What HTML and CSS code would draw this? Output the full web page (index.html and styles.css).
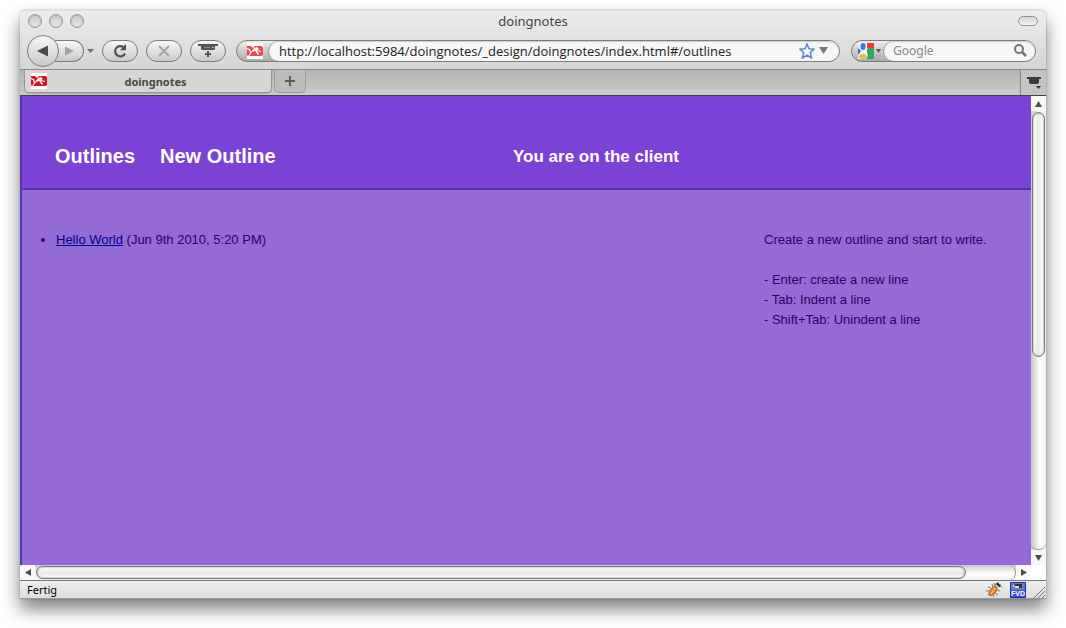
FILE: index.html
```
<!DOCTYPE html>
<html lang="en">
<head>
<meta charset="utf-8">
<title>doingnotes</title>
<link rel="stylesheet" href="styles.css">
</head>
<body>
<div class="window">
  <div class="chrome">
    <div class="titlebar">
      <div class="lights">
        <button class="light" aria-label="Close window"></button>
        <button class="light" aria-label="Minimize window"></button>
        <button class="light" aria-label="Zoom window"></button>
      </div>
      <span class="window-title">doingnotes</span>
      <button class="toolbar-toggle" aria-label="Toggle toolbar"></button>
    </div>
    <div class="toolbar">
      <div class="history">
        <button class="back" aria-label="Back"><svg width="12" height="12" viewBox="0 0 12 12"><path d="M0 6 11 0.500v11z" fill="#4b4b4b"/></svg></button>
        <button class="forward" aria-label="Forward"><svg width="10" height="10" viewBox="0 0 10 10"><path d="M10 5 1 0.500v9z" fill="#a2a2a2"/></svg></button>
        <button class="plain history-menu" aria-label="History"><svg width="7" height="4" viewBox="0 0 7 4"><path d="M0 0h7L3.500 4z" fill="#6d6d6d"/></svg></button>
      </div>
      <button class="pill" aria-label="Reload"><svg width="16" height="16" viewBox="0 0 16 16"><path d="M13 10.500A5.200 5.200 0 1 1 11.300 4" fill="none" stroke="#505050" stroke-width="2.200"/><path d="M14 1v6.200H8z" fill="#505050"/></svg></button>
      <button class="pill" aria-label="Stop"><svg width="12" height="12" viewBox="0 0 12 12"><path d="M1 1l10 10M11 1 1 11" stroke="#a5a5a5" stroke-width="2"/></svg></button>
      <button class="pill" aria-label="Add video"><svg width="20" height="14" viewBox="0 0 20 14"><path d="M0 0h20v2h-3v3q0 1-1 1H4q-1 0-1-1V2H0z" fill="#555"/><path d="M6 3.500h6" stroke="#888"/><path d="M14 3.500h2" stroke="#bbb"/><path d="M10 7v6M7 10h6" stroke="#555" stroke-width="2"/></svg></button>
      <div class="field address">
        <span class="identity"><svg width="16" height="16" viewBox="0 0 16 16"><path d="M0 0h16v16H0z" fill="#fff"/><path d="M0 3h4l2 2 2-2h7l1 2v7q-1 1-2 1H2q-2 0-2-1z" fill="#e84a4e"/><path d="M0 5l3 1 1 3 3-4 3-1 2 2-2 1 4 1v1l-4-1 2 3-1 1-3-4-3 1-3 4H1l2-3-1-3-2-1z" fill="#fff"/></svg></span>
        <div class="field-body">
          <input class="input url" type="text" aria-label="Address" value="http://localhost:5984/doingnotes/_design/doingnotes/index.html#/outlines">
          <button class="plain" aria-label="Bookmark this page"><svg width="16" height="16" viewBox="0 0 16 16"><path d="M8 1l2 4.700 5 .4-3.700 3.500 1.200 5.400L8 12.200 3.500 15l1.200-5.400L1 6.100l5-.4z" fill="#f4f8ff" stroke="#5d86d2" stroke-width="1.500"/></svg></button>
          <button class="plain" aria-label="Show history"><svg width="9" height="7" viewBox="0 0 9 7"><path d="M0 0h9L4.500 7z" fill="#777"/></svg></button>
        </div>
      </div>
      <div class="field search">
        <button class="plain identity engine" aria-label="Search engine"><svg width="16" height="16" viewBox="0 0 16 16"><path d="M0 0h16v16H0z" fill="#e9eef5"/><path d="M9 0h7v5h-7z" fill="#ee3b33"/><path d="M9 6q0-1 2-1h5v11H8q3-3 1-6z" fill="#35a660"/><path d="M0 5l3 3-3 4z" fill="#3b65b5"/><ellipse cx="5" cy="3.500" rx="2.500" ry="3.500" fill="#3a7bd0"/><path d="M4 8q5-1 5 3z" fill="#fff"/><ellipse cx="5" cy="13.500" rx="4" ry="2.500" fill="#efb93e"/></svg><svg width="5" height="4" viewBox="0 0 5 4"><path d="M0 0h5L2.500 4z" fill="#555"/></svg></button>
        <div class="field-body">
          <input class="input" type="text" aria-label="Search" placeholder="Google">
          <button class="plain" aria-label="Search"><svg width="13" height="13" viewBox="0 0 13 13"><circle cx="5" cy="5" r="4" fill="none" stroke="#777" stroke-width="2"/><path d="M8 8l4 4" stroke="#777" stroke-width="2.500"/></svg></button>
        </div>
      </div>
    </div>
  </div>
  <div class="tabs">
    <button class="tab"><svg width="16" height="16" viewBox="0 0 16 16"><path d="M0 0h16v16H0z" fill="#fff"/><path d="M0 3h4l2 2 2-2h7l1 2v7q-1 1-2 1H2q-2 0-2-1z" fill="#df1018"/><path d="M0 5l3 1 1 3 3-4 3-1 2 2-2 1 4 1v1l-4-1 2 3-1 1-3-4-3 1-3 4H1l2-3-1-3-2-1z" fill="#fff"/></svg><span class="tab-label">doingnotes</span></button>
    <button class="new-tab" aria-label="New tab"><svg width="10" height="10" viewBox="0 0 10 10"><path d="M5 0v10M0 5h10" stroke="#5c5c5c" stroke-width="2"/></svg></button>
    <button class="tab-menu" aria-label="List tabs"><svg width="14" height="12" viewBox="0 0 14 12"><path d="M0 0h14v2h-2v3q0 2-2 2H4Q2 7 2 5V2H0z" fill="#3b3b3b"/><path d="M9 9h5l-2.500 3z" fill="#333"/></svg></button>
  </div>
  <div class="viewport">
    <div class="page">
      <header class="banner">
        <nav class="nav"><a href="#/outlines">Outlines</a><a href="#/new">New Outline</a></nav>
        <p class="location">You are on the client</p>
      </header>
      <main class="content">
        <ul class="outlines">
          <li><a href="#/outlines/hello-world">Hello World</a> (Jun 9th 2010, 5:20 PM)</li>
        </ul>
        <aside class="help">
          <p>Create a new outline and start to write.</p>
          <p>- Enter: create a new line<br>- Tab: Indent a line<br>- Shift+Tab: Unindent a line</p>
        </aside>
      </main>
    </div>
    <div class="scroll scroll-y">
      <button class="plain arrow" aria-label="Scroll up"><svg width="7" height="6" viewBox="0 0 7 6"><path d="M3.500 0 7 6H0z" fill="#4c4c4c"/></svg></button>
      <div class="track"><div class="thumb"></div></div>
      <button class="plain arrow" aria-label="Scroll down"><svg width="7" height="6" viewBox="0 0 7 6"><path d="M3.500 6 7 0H0z" fill="#4c4c4c"/></svg></button>
    </div>
    <div class="scroll scroll-x">
      <button class="plain arrow" aria-label="Scroll left"><svg width="6" height="7" viewBox="0 0 6 7"><path d="M0 3.500 6 0v7z" fill="#4c4c4c"/></svg></button>
      <div class="track"><div class="thumb"></div></div>
      <button class="plain arrow" aria-label="Scroll right"><svg width="6" height="7" viewBox="0 0 6 7"><path d="M6 3.500 0 0v7z" fill="#4c4c4c"/></svg></button>
    </div>
  </div>
  <footer class="status">
    <span class="status-text">Fertig</span>
    <button class="plain" aria-label="Firebug"><svg width="16" height="16" viewBox="0 0 16 16"><path d="M5 6 2 5M4 9H0M4 11l-2 2M7 13l1 2M9 11l3 2M11 8l3 1M7 5 6 2M9 4 8 1M14 4l2 1" stroke="#a3714c"/><ellipse cx="7" cy="9" rx="2.500" ry="5.500" transform="rotate(40 7 9)" fill="#e58a35" stroke="#b9652a"/><path d="M9 6 5 12" stroke="#ffd09a"/><circle cx="12" cy="3" r="2.500" fill="#2c2f2b"/><path d="M10 3l3 3M13 1l1 1" stroke="#dfe8dc" stroke-width="1.500"/></svg></button>
    <button class="plain" aria-label="FVD"><svg width="16" height="16" viewBox="0 0 16 16"><path d="M.500.500h15v15H.500z" fill="#3d55cc" stroke="#0a2fc4"/><path d="M1 1h14v7H1z" fill="#6e79c4"/><path d="M5 2h7v4H5z" fill="#333"/><path d="M5 4h4v2H5zM3 3h1v2H3z" fill="#ddd"/><text x="8" y="14" class="fvd">FVD</text></svg></button>
    <svg class="grip" width="11" height="11" viewBox="0 0 11 11"><path d="M0 11 11 0M4 11l7-7M8 11l3-3" stroke="#777"/></svg>
  </footer>
</div>
</body>
</html>
```
FILE: styles.css
```
* { box-sizing: border-box; }

body {
  margin: 0;
  padding: 10px 20px 29px;
  min-height: 100vh;
  display: flex;
  background: #fff;
  font-family: "Noto Sans", "Open Sans", sans-serif;
}

button {
  display: flex;
  align-items: center;
  justify-content: center;
  margin: 0;
  padding: 0;
  font: inherit;
}

svg { display: block; flex: none; }

.plain { border: 0; background: none; }

.window {
  flex: 1;
  min-width: 0;
  display: flex;
  flex-direction: column;
  border-radius: 5px 5px 0 0;
  box-shadow: 0 10px 18px rgba(0, 0, 0, .5), 0 0 2px rgba(0, 0, 0, .25);
}

.chrome {
  height: 60px;
  border-radius: 5px 5px 0 0;
  border-top: 1px solid #ddd;
  border-bottom: 1px solid #8b8b8b;
  background: linear-gradient(#ededed, #d5d5d5);
}

.titlebar {
  height: 20px;
  padding: 0 8px;
  display: grid;
  grid-template-columns: 1fr auto 1fr;
  align-items: center;
}

.lights { display: flex; gap: 7px; }

.light {
  width: 14px;
  height: 14px;
  border: 1px solid #979797;
  border-radius: 50%;
  background: linear-gradient(#c8c8c8, #ececec);
  box-shadow: inset 0 0 2px #aaa;
}

.window-title { font-size: 13px; line-height: 20px; color: #444; }

.toolbar-toggle {
  justify-self: end;
  width: 20px;
  height: 10px;
  border: 1px solid #939393;
  border-radius: 5px;
  background: linear-gradient(#d5d5d5, #f4f4f4);
}

.toolbar {
  height: 39px;
  padding: 0 10px 0 7px;
  display: flex;
  align-items: center;
}

.history { display: flex; align-items: center; margin-right: 6px; }

.back, .forward, .pill {
  border: 1px solid #7c7c7c;
  background: linear-gradient(#f7f7f7, #c9c9c9);
}

.back { z-index: 1; width: 32px; height: 32px; border-radius: 50%; }

.forward {
  width: 29px;
  height: 22px;
  margin-left: -4px;
  border-left: 0;
  border-radius: 0 11px 11px 0;
}

.history-menu { width: 12px; height: 22px; }

.pill { width: 36px; height: 22px; border-radius: 11px; margin-right: 8px; }

.field {
  height: 22px;
  display: flex;
  min-width: 0;
  border: 1px solid #7c7c7c;
  border-radius: 11px;
  background: linear-gradient(#eee, #aaa);
}

.address { flex: 1; margin: 0 11px 0 2px; }

.search { width: 185px; }

.identity { width: 31px; display: flex; align-items: center; justify-content: center; padding-left: 4px; }

.engine { gap: 2px; padding-left: 4px; }

.field-body {
  flex: 1;
  min-width: 0;
  display: flex;
  align-items: center;
  gap: 4px;
  padding: 0 11px 0 10px;
  border-left: 1px solid #999;
  border-radius: 10px;
  background: #f6f6f6;
  box-shadow: inset 0 1px 1px #ccc;
}

.search .field-body { padding: 0 8px 0 9px; }

.input {
  flex: 1;
  min-width: 0;
  height: 20px;
  padding: 0;
  border: 0;
  background: none;
  font: inherit;
  font-size: 12px;
  color: #222;
}

.url { font-family: "Open Sans", "Noto Sans", sans-serif; font-size: 13px; }

.input::placeholder { color: #888; opacity: 1; }

.tabs {
  height: 26px;
  display: flex;
  align-items: flex-start;
  padding-left: 4px;
  border-bottom: 1px solid #414141;
  background: linear-gradient(#b4b4b4, #cbcbcb);
}

.tab {
  width: 248px;
  height: 23px;
  padding: 0 7px 0 6px;
  border: 1px solid #999;
  border-top: 0;
  border-radius: 0 0 5px 5px;
  background: #d6d6d6;
  box-shadow: 0 1px 1px #aaa;
}

.tab-label {
  flex: 1;
  text-align: center;
  font-size: 11px;
  font-weight: 700;
  color: #484848;
}

.new-tab {
  width: 32px;
  height: 23px;
  margin-left: 2px;
  border: 1px solid #9c9c9c;
  border-top: 0;
  border-radius: 0 0 5px 5px;
  background: #bcbcbc;
}

.tab-menu {
  width: 26px;
  height: 25px;
  margin-left: auto;
  border: 0;
  border-left: 1px solid #888;
  background: #c4c4c4;
}

.viewport {
  flex: 1;
  display: grid;
  grid-template-columns: minmax(0, 1fr) 15px;
  grid-template-rows: 1fr 15px;
  background: #fff;
}

.page {
  border-left: 2px solid #5236b2;
  background: #946bd6;
  color: #2a0066;
  font-family: "Liberation Sans", Arial, sans-serif;
  font-size: 13px;
  line-height: 20px;
}

.banner {
  display: grid;
  grid-template-columns: 491fr 518fr;
  align-items: end;
  padding: 48px 0 20px;
  border-bottom: 2px solid #5236b2;
  background: #7b43d5;
  color: #fff;
  font-weight: 700;
  line-height: 24px;
}

.nav { display: flex; gap: 25px; padding-left: 33px; font-size: 20px; }

.nav a { color: inherit; text-decoration: none; }

.location { margin: 0; font-size: 17px; line-height: 22px; }

.content {
  display: grid;
  grid-template-columns: 742fr 267fr;
  padding-top: 40px;
}

.outlines { margin: 0; padding-left: 34px; }

.outlines a { color: #00008f; }

.help p { margin: 0 0 20px; }

.scroll { display: flex; }

.scroll-y { flex-direction: column; background: linear-gradient(90deg, #c8c8c8, #fff 60%, #eee); }

.scroll-x { background: linear-gradient(#c8c8c8, #fff 60%, #eee); }

.arrow { width: 15px; height: 15px; background: #f8f8f8; }

.track { flex: 1; min-width: 0; min-height: 0; }

.scroll-y .track { padding: 1px 0 0 1px; border-bottom: 1px solid #999; border-radius: 0 0 7px 7px; }

.scroll-x .track { padding: 1px 0 0 1px; border-right: 1px solid #999; border-radius: 0 7px 7px 0; }

.thumb {
  border: 1px solid #777;
  border-radius: 7px;
  background: #f7f7f7;
}

.scroll-y .thumb {
  width: 13px;
  height: 56%;
  background: linear-gradient(90deg, #fff, #e8e8e8 45%, #fff);
  box-shadow: inset 0 0 2px #777;
}

.scroll-x .thumb {
  width: 95%;
  height: 13px;
  background: linear-gradient(#fff, #e8e8e8 55%, #fff);
  box-shadow: inset 0 0 2px #777;
}

.status {
  height: 19px;
  display: flex;
  align-items: center;
  gap: 8px;
  padding: 0 1px 0 7px;
  border-top: 1px solid #777;
  border-bottom: 1px solid #999;
  background: linear-gradient(#eee, #dedede);
}

.status-text { flex: 1; font-size: 11px; line-height: 16px; color: #000; }

.fvd {
  font: bold 7px "Liberation Sans", sans-serif;
  text-anchor: middle;
  fill: #fff;
}

.grip { align-self: flex-end; }
```
